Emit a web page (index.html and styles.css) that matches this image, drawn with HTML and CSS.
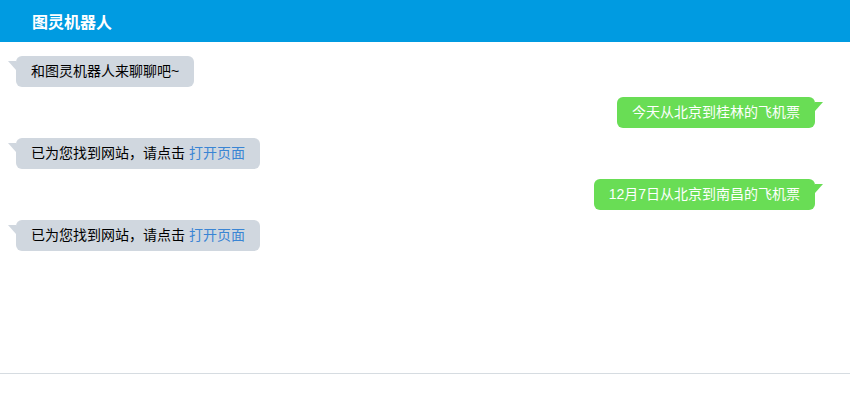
FILE: index.html
```html
<!DOCTYPE html>
<html lang="zh-CN">
<head>
    <meta charset="UTF-8">
    <meta name="viewport" content="width=device-width, initial-scale=1.0">
    <title>图灵机器人</title>
    <link rel="stylesheet" href="styles.css">
</head>
<body>
    <div class="header">
        <span class="title">图灵机器人</span>
    </div>

    <div class="chat">
        <div class="msg robot">
            <div class="bubble">和图灵机器人来聊聊吧~</div>
        </div>
        <div class="msg me">
            <div class="bubble">今天从北京到桂林的飞机票</div>
        </div>
        <div class="msg robot">
            <div class="bubble">已为您找到网站，请点击 <a href="#">打开页面</a></div>
        </div>
        <div class="msg me">
            <div class="bubble">12月7日从北京到南昌的飞机票</div>
        </div>
        <div class="msg robot">
            <div class="bubble">已为您找到网站，请点击 <a href="#">打开页面</a></div>
        </div>
    </div>

    <div class="footer"></div>
</body>
</html>
```

FILE: styles.css
```css
body {
    margin: 0;
    font-family: "Liberation Sans", "Noto Sans CJK SC", sans-serif;
    font-size: 14px;
    color: #000;
    background-color: #fff;
}
.header {
    height: 42px;
    background-color: #009be1;
    padding-left: 32px;
    display: flex;
    align-items: center;
}
.title {
    color: #fff;
    font-size: 16px;
    font-weight: bold;
}
.chat {
    height: 317px;
    padding: 14px 35px 0 16px;
    display: flex;
    flex-direction: column;
    gap: 10px;
}
.msg {
    display: flex;
}
.msg.me {
    justify-content: flex-end;
}
.bubble {
    position: relative;
    height: 31px;
    line-height: 31px;
    padding: 0 15px;
    border-radius: 6px;
}
.robot .bubble {
    background-color: #d0d7df;
}
.me .bubble {
    background-color: #69dd55;
    color: #fff;
}
.bubble::before {
    content: "";
    position: absolute;
    top: 5px;
    width: 0;
    height: 0;
    border-top: 9px solid;
}
.robot .bubble::before {
    left: -8px;
    border-top-color: #d0d7df;
    border-left: 8px solid transparent;
}
.me .bubble::before {
    right: -8px;
    border-top-color: #69dd55;
    border-right: 8px solid transparent;
}
.bubble a {
    color: #3a85d4;
    text-decoration: none;
}
.footer {
    height: 27px;
    border-top: 1px solid #d6dce1;
}
```
